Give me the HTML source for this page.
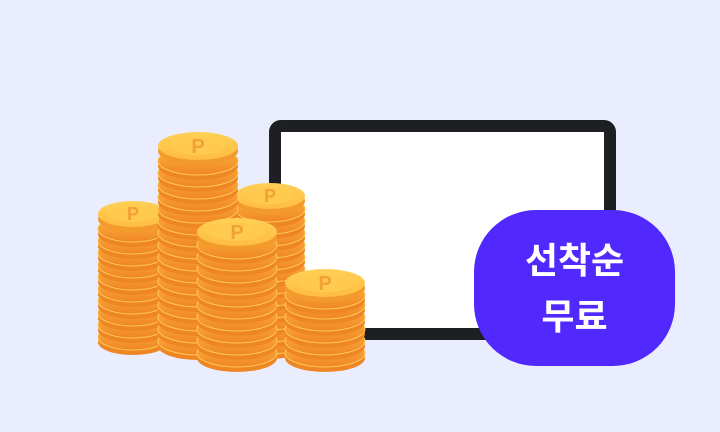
<!DOCTYPE html>
<html><head><meta charset="utf-8"><style>
body{margin:0;width:720px;height:432px;background:#e9edfd;overflow:hidden;position:relative;font-family:"Liberation Sans","Noto Sans CJK KR",sans-serif}
.tab{position:absolute;left:269px;top:120px;width:323px;height:196px;border:12px solid #1e1f23;border-radius:12px;background:#fff}
.badge{position:absolute;left:474px;top:210px;width:201px;height:156px;border-radius:62px;background:#5129ff;color:#fff;font-weight:700;font-size:36px;text-align:center;line-height:56px;box-sizing:border-box;padding-top:23px}
svg{position:absolute;left:0;top:0}
</style></head><body>
<div class="tab"></div>
<svg width="720" height="432">
<defs>
<linearGradient id="s" x1="0" y1="0" x2="0" y2="1"><stop offset="0" stop-color="#ffb540"/><stop offset="1" stop-color="#ef8624"/></linearGradient>
<linearGradient id="t" x1="0" y1="0" x2="0" y2="1"><stop offset="0" stop-color="#ffd055"/><stop offset="1" stop-color="#ffbc42"/></linearGradient>
<g id="c8"><ellipse cx="0" cy="5" rx="40" ry="14" fill="#ee8624"/><ellipse cx="0" cy="0" rx="40" ry="14" fill="url(#s)" stroke="#ffc85a" stroke-width="1"/></g>
<g id="c7"><ellipse cx="0" cy="5" rx="35" ry="13" fill="#ee8624"/><ellipse cx="0" cy="0" rx="35" ry="13" fill="url(#s)" stroke="#ffc85a" stroke-width="1"/></g>
<g id="t8"><ellipse cx="0" cy="5" rx="40" ry="14" fill="#f29a2c"/><ellipse cx="0" cy="0" rx="40" ry="14" fill="url(#t)"/><ellipse cx="0" cy="0" rx="28" ry="9" fill="#ffca4e"/><text x="0" y="7" font-size="20" font-weight="700" text-anchor="middle" fill="#f2a135" font-family="Liberation Sans">P</text></g>
<g id="t7"><ellipse cx="0" cy="5" rx="35" ry="13" fill="#f29a2c"/><ellipse cx="0" cy="0" rx="35" ry="13" fill="url(#t)"/><ellipse cx="0" cy="0" rx="24" ry="8" fill="#ffca4e"/><text x="0" y="6" font-size="18" font-weight="700" text-anchor="middle" fill="#f2a135" font-family="Liberation Sans">P</text></g>
</defs>
<g transform="translate(133,0)">
<use href="#c7" y="337"/><use href="#c7" y="325"/><use href="#c7" y="313"/><use href="#c7" y="301"/><use href="#c7" y="289"/><use href="#c7" y="277"/><use href="#c7" y="265"/><use href="#c7" y="253"/><use href="#c7" y="241"/><use href="#c7" y="229"/><use href="#t7" y="214"/>
</g>
<g transform="translate(270,0)">
<use href="#c7" y="341"/><use href="#c7" y="329"/><use href="#c7" y="317"/><use href="#c7" y="305"/><use href="#c7" y="293"/><use href="#c7" y="281"/><use href="#c7" y="269"/><use href="#c7" y="257"/><use href="#c7" y="245"/><use href="#c7" y="233"/><use href="#c7" y="221"/><use href="#c7" y="209"/><use href="#t7" y="196"/>
</g>
<g transform="translate(198,0)">
<use href="#c8" y="341"/><use href="#c8" y="329"/><use href="#c8" y="317"/><use href="#c8" y="305"/><use href="#c8" y="293"/><use href="#c8" y="281"/><use href="#c8" y="269"/><use href="#c8" y="257"/><use href="#c8" y="245"/><use href="#c8" y="233"/><use href="#c8" y="221"/><use href="#c8" y="209"/><use href="#c8" y="197"/><use href="#c8" y="185"/><use href="#c8" y="173"/><use href="#c8" y="161"/><use href="#t8" y="146"/>
</g>
<g transform="translate(237,0)">
<use href="#c8" y="353"/><use href="#c8" y="341"/><use href="#c8" y="329"/><use href="#c8" y="317"/><use href="#c8" y="305"/><use href="#c8" y="293"/><use href="#c8" y="281"/><use href="#c8" y="269"/><use href="#c8" y="257"/><use href="#c8" y="245"/><use href="#t8" y="232"/>
</g>
<g transform="translate(325,0)">
<use href="#c8" y="353"/><use href="#c8" y="341"/><use href="#c8" y="329"/><use href="#c8" y="317"/><use href="#c8" y="305"/><use href="#c8" y="295"/><use href="#t8" y="283"/>
</g>
</svg>
<div class="badge">선착순<br>무료</div>
</body></html>
